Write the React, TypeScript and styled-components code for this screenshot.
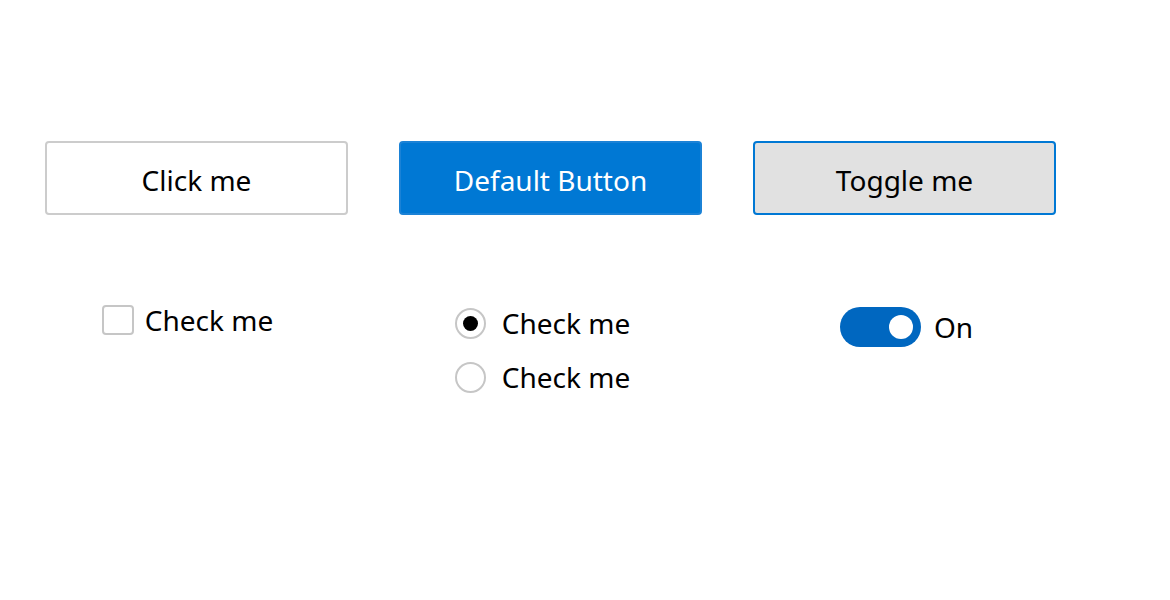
import React, { useState } from "react";
import styled, { createGlobalStyle, css } from "styled-components";

const GlobalStyle = createGlobalStyle`
  html, body {
    margin: 0;
    padding: 0;
    background: #ffffff;
    font-family: "Noto Sans", "Open Sans", sans-serif;
    color: #000000;
  }
`;

const Page = styled.div`
  width: 1170px;
  height: 600px;
  box-sizing: border-box;
  padding: 141px 0 0 45px;
`;

const Grid = styled.div`
  display: grid;
  grid-template-columns: repeat(3, 303px);
  column-gap: 51px;
`;

const ButtonRow = styled(Grid)`
  height: 74px;
`;

type Variant = "standard" | "accent" | "toggle";

const Button = styled.button<{ $variant: Variant }>`
  height: 74px;
  box-sizing: border-box;
  border-radius: 4px;
  font-family: inherit;
  font-size: 28px;
  cursor: pointer;
  padding: 3px 0 0;
  ${({ $variant }) =>
    $variant === "accent"
      ? css`
          background: #0078d4;
          border: 2px solid #1b82d6;
          color: #ffffff;
        `
      : $variant === "toggle"
      ? css`
          background: #e1e1e1;
          border: 2px solid #0078d4;
          color: #000000;
        `
      : css`
          background: #ffffff;
          border: 2px solid #cccccc;
          color: #000000;
        `}
`;

const ControlRow = styled(Grid)`
  margin-top: 92px;
  align-items: start;
`;

const Cell = styled.div<{ $top?: number; $shift?: number }>`
  display: flex;
  justify-content: center;
  margin-top: ${({ $top }) => $top ?? 0}px;
  margin-left: ${({ $shift }) => ($shift ?? 0) * 2}px;
`;

const Stack = styled.div`
  display: flex;
  flex-direction: column;
  gap: 22px;
`;

const Option = styled.label<{ $gap?: number }>`
  display: flex;
  align-items: center;
  gap: ${({ $gap }) => $gap ?? 11}px;
  font-size: 28px;
  line-height: 32px;
  cursor: pointer;
`;

const Box = styled.span`
  width: 32px;
  height: 30px;
  box-sizing: border-box;
  border: 2px solid #c6c6c6;
  border-radius: 4px;
  background: #ffffff;
`;

const Radio = styled.span<{ $checked: boolean }>`
  width: 31px;
  height: 31px;
  box-sizing: border-box;
  border-radius: 50%;
  border: 2px solid #c6c6c6;
  background: #ffffff;
  display: flex;
  align-items: center;
  justify-content: center;

  &::after {
    content: "";
    width: 15px;
    height: 15px;
    border-radius: 50%;
    background: ${({ $checked }) => ($checked ? "#000000" : "transparent")};
  }
`;

const Track = styled.span<{ $on: boolean }>`
  width: 81px;
  height: 40px;
  box-sizing: border-box;
  border-radius: 20px;
  background: ${({ $on }) => ($on ? "#0067c0" : "#ffffff")};
  border: ${({ $on }) => ($on ? "none" : "2px solid #c6c6c6")};
  display: flex;
  align-items: center;
  justify-content: ${({ $on }) => ($on ? "flex-end" : "flex-start")};
  padding: 0 8px;

  &::after {
    content: "";
    width: 24px;
    height: 24px;
    border-radius: 50%;
    background: ${({ $on }) => ($on ? "#ffffff" : "#5c5c5c")};
  }
`;

export default function App() {
  const [pressed, setPressed] = useState(false);
  const [checked, setChecked] = useState(false);
  const [radio, setRadio] = useState(0);
  const [on, setOn] = useState(true);

  return (
    <>
      <GlobalStyle />
      <Page>
        <ButtonRow>
          <Button $variant="standard">Click me</Button>
          <Button $variant="accent">Default Button</Button>
          <Button $variant="toggle" onClick={() => setPressed(!pressed)}>
            Toggle me
          </Button>
        </ButtonRow>
        <ControlRow>
          <Cell $top={-3} $shift={-9}>
            <Option onClick={() => setChecked(!checked)}>
              <Box />
              Check me
            </Option>
          </Cell>
          <Cell $top={0} $shift={-8}>
            <Stack>
              <Option $gap={16} onClick={() => setRadio(0)}>
                <Radio $checked={radio === 0} />
                Check me
              </Option>
              <Option $gap={16} onClick={() => setRadio(1)}>
                <Radio $checked={radio === 1} />
                Check me
              </Option>
            </Stack>
          </Cell>
          <Cell $top={0} $shift={2}>
            <Option $gap={13} onClick={() => setOn(!on)}>
              <Track $on={on} />
              {on ? "On" : "Off"}
            </Option>
          </Cell>
        </ControlRow>
      </Page>
    </>
  );
}
